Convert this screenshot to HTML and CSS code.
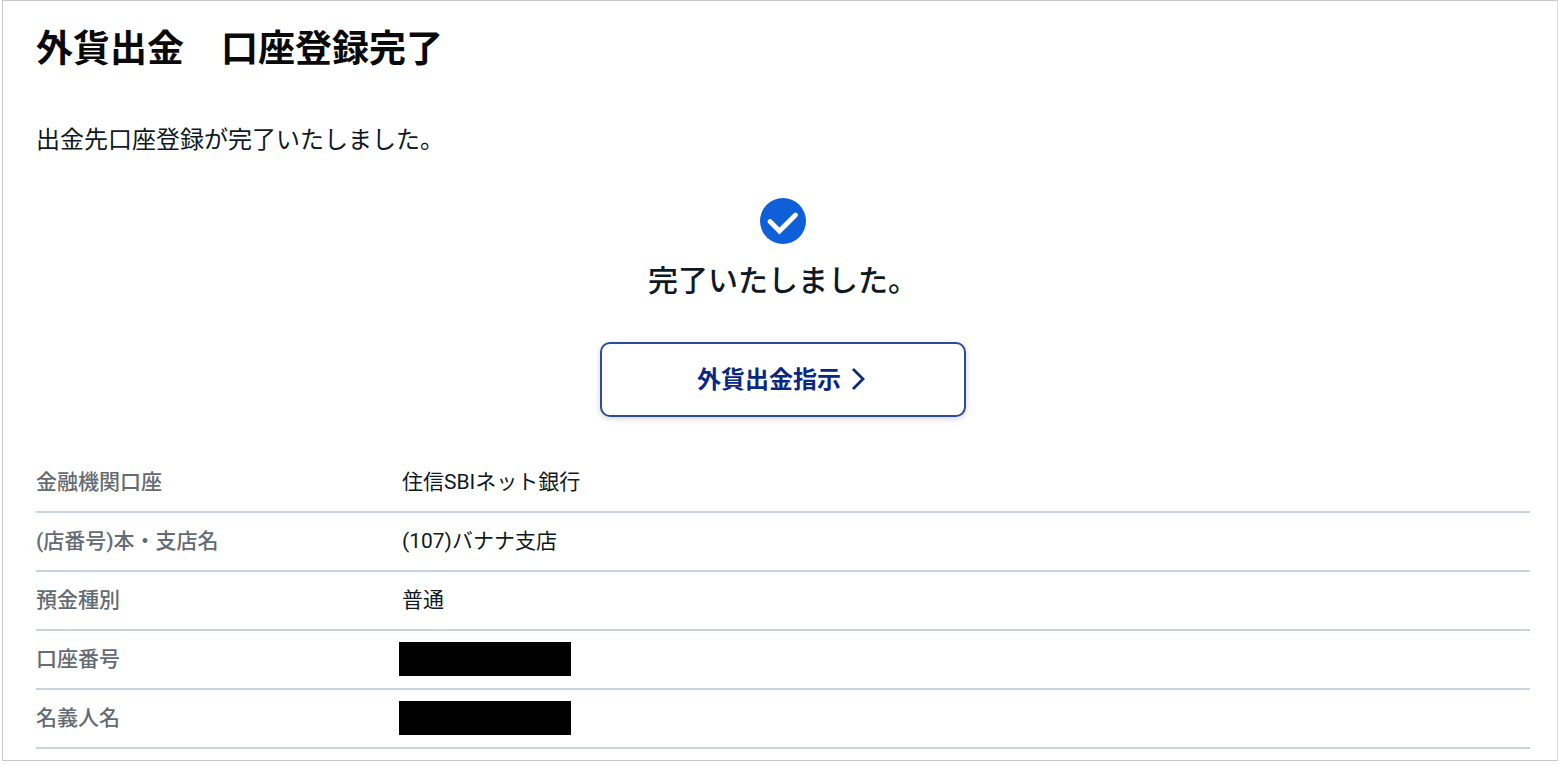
FILE: index.html
```html
<!DOCTYPE html>
<html lang="ja">
  <head>
    <meta charset="UTF-8" />
    <meta name="viewport" content="width=device-width, initial-scale=1.0" />
    <title>外貨出金　口座登録完了</title>

    <link rel="stylesheet" href="styles.css">
  </head>
  <body>
    <main class="page">
      <h1 class="page-title">外貨出金　口座登録完了</h1>
      <p class="page-lead">出金先口座登録が完了いたしました。</p>

      <section class="complete">
        <svg class="complete-icon" viewBox="0 0 46 46" aria-hidden="true">
          <circle cx="23" cy="23" r="23" fill="#0f5fd9" />
          <path d="M10 23.5 L19.5 33 L35.5 17" fill="none" stroke="#fff" stroke-width="4.8" stroke-linecap="round" />
        </svg>
        <h2 class="complete-title">完了いたしました。</h2>
        <button class="complete-button" type="button">
          外貨出金指示
          <svg class="complete-arrow" viewBox="0 0 18 24" aria-hidden="true">
            <path d="M2 3 L12 13 L2 23" fill="none" stroke="#0a2882" stroke-width="2.8" />
          </svg>
        </button>
      </section>

      <table class="account">
        <tbody>
          <tr>
            <th scope="row">金融機関口座</th>
            <td>住信SBIネット銀行</td>
          </tr>
          <tr>
            <th scope="row">(店番号)本・支店名</th>
            <td>(107)バナナ支店</td>
          </tr>
          <tr>
            <th scope="row">預金種別</th>
            <td>普通</td>
          </tr>
          <tr>
            <th scope="row">口座番号</th>
            <td class="is-masked"><span class="mask"></span></td>
          </tr>
          <tr>
            <th scope="row">名義人名</th>
            <td class="is-masked"><span class="mask"></span></td>
          </tr>
        </tbody>
      </table>
    </main>
  </body>
</html>
```
FILE: styles.css
```css
*,
*:before,
*:after {
  box-sizing: border-box;
}

body {
  margin: 0;
  background-color: #fff;
  color: #0f1923;
  font-family: Roboto, "Noto Sans CJK JP", sans-serif;
}

.page {
  margin: 0 2px;
  padding: 25px 27px 11px 33px;
  border: 1px solid #c8c8c8;
  border-right-color: #dcdcdc;
}

.page-title {
  margin: 0;
  color: #0a0a0a;
  font-size: 37px;
  font-weight: 700;
  line-height: 48px;
}

.page-lead {
  margin: 48px 0 0;
  font-size: 24px;
  font-weight: 400;
  line-height: 36px;
}

/* Completion message */
.complete {
  display: flex;
  flex-direction: column;
  align-items: center;
  margin-top: 40px;
}

.complete-icon {
  width: 46px;
  height: 46px;
}

.complete-title {
  margin: 12px 0 36px;
  font-size: 30px;
  font-weight: 500;
  line-height: 50px;
}

.complete-button {
  display: flex;
  align-items: center;
  justify-content: center;
  gap: 10px;
  width: 366px;
  max-width: 100%;
  height: 75px;
  padding: 0 0 4px;
  border: 2px solid #2d4b9b;
  border-radius: 10px;
  background-color: #fff;
  box-shadow: 0 2px 6px rgba(0, 0, 0, 0.16);
  color: #0a2882;
  font-family: inherit;
  font-size: 24px;
  font-weight: 700;
  cursor: pointer;
}

.complete-arrow {
  width: 18px;
  height: 24px;
}

/* Registered account */
.account {
  width: 100%;
  margin-top: 36px;
  border-collapse: collapse;
  font-size: 21px;
  line-height: 31px;
}

.account th,
.account td {
  height: 59px;
  padding: 0 0 0 3px;
  border-bottom: 2px solid #c8d2e0;
  font-weight: 400;
  text-align: left;
  vertical-align: middle;
}

.account th {
  width: 363px;
  padding: 0;
  color: #646b73;
  font-weight: 500;
}

.account .is-masked {
  padding: 0 0 2px;
}

.mask {
  display: block;
  width: 172px;
  height: 34px;
  background-color: #000;
}
```
